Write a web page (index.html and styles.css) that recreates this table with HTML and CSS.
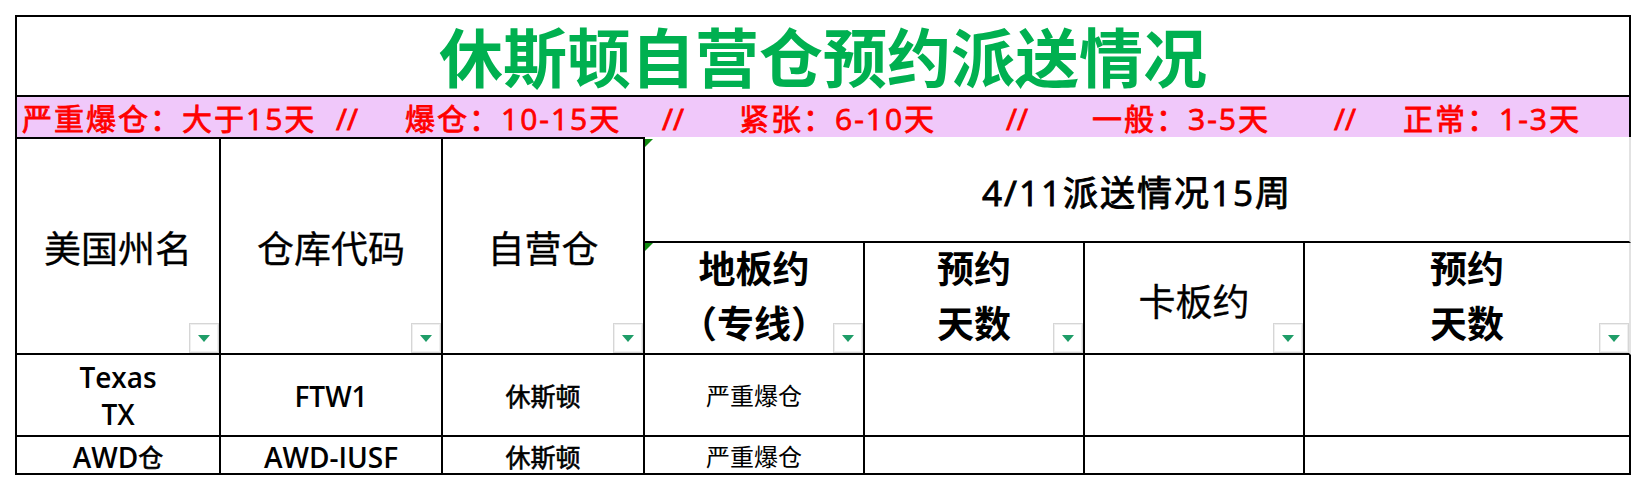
FILE: index.html
```html
<!DOCTYPE html>
<html lang="zh-CN">
<head>
<meta charset="utf-8">
<title>休斯顿自营仓预约派送情况</title>
<link rel="stylesheet" href="styles.css">
</head>
<body>
<div class="sheet">
  <div class="cell title">休斯顿自营仓预约派送情况</div>
  <div class="cell legend">
    <span class="seg s1">严重爆仓：大于15天</span>
    <span class="seg s2">//</span>
    <span class="seg s3">爆仓：10-15天</span>
    <span class="seg s4">//</span>
    <span class="seg s5">紧张：6-10天</span>
    <span class="seg s6">//</span>
    <span class="seg s7">一般：3-5天</span>
    <span class="seg s8">//</span>
    <span class="seg s9">正常：1-3天</span>
  </div>

  <div class="cell hd">美国州名<span class="filter"></span></div>
  <div class="cell hd">仓库代码<span class="filter"></span></div>
  <div class="cell hd">自营仓<span class="filter"></span></div>
  <div class="cell week">4/11派送情况15周<span class="flag"></span></div>

  <div class="cell sub">地板约<br>（专线）<span class="flag top0"></span><span class="filter"></span></div>
  <div class="cell sub">预约<br>天数<span class="filter"></span></div>
  <div class="cell sub reg">卡板约<span class="filter"></span></div>
  <div class="cell sub end">预约<br>天数<span class="filter"></span></div>

  <div class="cell d r1">Texas<br>TX</div>
  <div class="cell d r1">FTW1</div>
  <div class="cell d r1"><span class="cjk">休斯顿</span></div>
  <div class="cell s r1">严重爆仓</div>
  <div class="cell d r1"></div>
  <div class="cell d r1"></div>
  <div class="cell d r1"></div>

  <div class="cell d r2">AWD<span class="cjk">仓</span></div>
  <div class="cell d r2">AWD-IUSF</div>
  <div class="cell d r2"><span class="cjk">休斯顿</span></div>
  <div class="cell s r2">严重爆仓</div>
  <div class="cell d r2"></div>
  <div class="cell d r2"></div>
  <div class="cell d r2"></div>
</div>
</body>
</html>
```

FILE: styles.css
```css
html, body {
  margin: 0;
  padding: 0;
  background: #ffffff;
}

body {
  padding: 15px 0 0 15px;
  font-family: "Open Sans", "Noto Sans CJK SC", sans-serif;
  color: #000000;
}

.sheet {
  box-sizing: border-box;
  width: 1616px;
  display: grid;
  grid-template-columns: 204px 222px 202px 220px 220px 220px 326px;
  grid-template-rows: 80px 40px 106px 112px 82px 38px;
  border-left: 2px solid #000;
  border-top: 2px solid #000;
}

.cell {
  box-sizing: border-box;
  position: relative;
  display: flex;
  align-items: center;
  justify-content: center;
  text-align: center;
  border-right: 2px solid #000;
  border-bottom: 2px solid #000;
  white-space: nowrap;
}

/* title row */
.title {
  grid-column: 1 / -1;
  color: #00b050;
  font-weight: 700;
  font-size: 64px;
  line-height: 1;
  padding-top: 4px;
}

/* legend row */
.legend {
  grid-column: 1 / -1;
  border-bottom: none;
  background: #f0c8fa;
  justify-content: flex-start;
  padding-left: 5px;
  padding-top: 3px;
  color: #ff0000;
  font-weight: 400;
  -webkit-text-stroke: 0.8px #ff0000;
  font-size: 30px;
  line-height: 1;
  letter-spacing: 2px;
}

.seg {
  flex: none;
  display: block;
  text-align: left;
}
.s1 { width: 314px; }
.s2 { width: 69px; letter-spacing: 0; }
.s3 { width: 257px; }
.s4 { width: 77px; letter-spacing: 0; }
.s5 { width: 267px; }
.s6 { width: 86px; letter-spacing: 0; }
.s7 { width: 242px; }
.s8 { width: 69px; letter-spacing: 0; }
.s9 { width: auto; }

/* header cells */
.hd {
  grid-row: 3 / 5;
  border-top: 2px solid #000;
  font-weight: 400;
  -webkit-text-stroke: 0.3px #000;
  font-size: 37px;
  line-height: 1;
  padding-top: 4px;
}

.week {
  grid-column: 4 / 8;
  border-right-color: #e2e2e2;
  font-weight: 400;
  -webkit-text-stroke: 0.9px #000;
  font-size: 35px;
  line-height: 1;
  letter-spacing: 2px;
  padding-top: 7px;
}

.sub {
  font-weight: 700;
  font-size: 37px;
  line-height: 55px;
  padding-bottom: 4px;
}
.sub.reg {
  font-weight: 400;
  -webkit-text-stroke: 0.3px #000;
  line-height: 1;
  padding-bottom: 0;
  padding-top: 6px;
}
.sub.end {
  border-right-color: #e2e2e2;
}

/* excel filter button */
.filter {
  position: absolute;
  right: 0;
  bottom: 0;
  box-sizing: border-box;
  width: 30px;
  height: 30px;
  border: 1px solid #d6d6d6;
  box-shadow: inset 0 0 0 1px #efefef;
  background: #ffffff;
  display: flex;
  align-items: center;
  justify-content: center;
  -webkit-text-stroke: 0;
}
.filter::after {
  content: "";
  width: 0;
  height: 0;
  border-left: 6px solid transparent;
  border-right: 6px solid transparent;
  border-top: 7px solid #1f9d68;
}

/* excel green corner indicator */
.flag {
  position: absolute;
  left: 0;
  top: 2px;
  width: 0;
  height: 0;
  border-top: 8px solid #108a10;
  border-right: 8px solid transparent;
}
.flag.top0 {
  top: 0;
}

/* data rows */
.d {
  font-weight: 600;
  font-size: 28px;
  line-height: 37px;
}
.d .cjk {
  font-size: 25px;
  font-weight: 400;
  -webkit-text-stroke: 0.6px #000;
}
.s {
  font-weight: 400;
  font-size: 24px;
  line-height: 1;
}
.r1 {
  padding-top: 2px;
}
.r2 {
  padding-top: 4px;
}
```
